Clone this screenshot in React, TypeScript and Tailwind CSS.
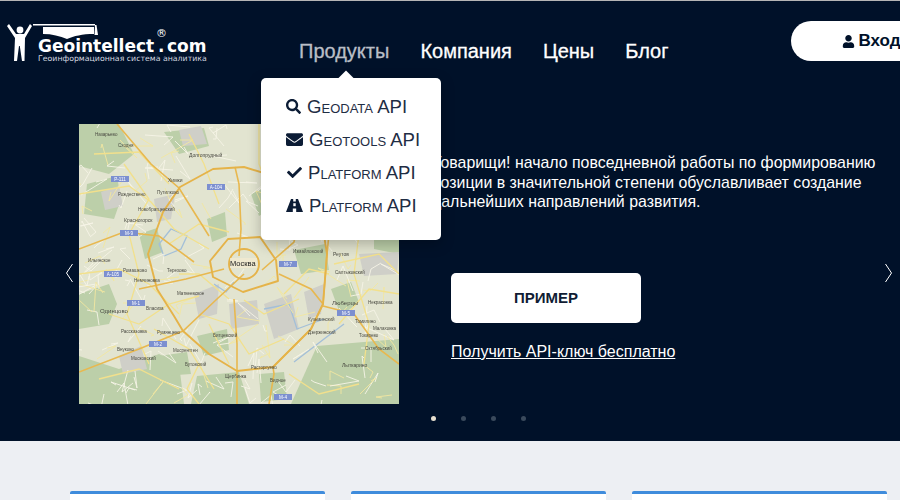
import { FaCheck, FaEnvelope, FaSearch, FaUser } from "react-icons/fa";

const font = "font-['Liberation_Sans',Arial,sans-serif]";

const parks = [
  "M0 0L40 0L55 30L30 50L0 42Z",
  "M8 60L38 52L42 75L35 95L5 90Z",
  "M0 170L30 160L38 180L30 200L0 205Z",
  "M0 232L40 245L80 230L100 240L105 280L0 280Z",
  "M205 0L250 0L245 35L212 30Z",
  "M238 222L320 215L320 280L212 280Z",
  "M118 252L160 248L170 280L112 280Z",
  "M252 165L272 158L280 178L262 192Z",
  "M85 8L125 4L130 22L100 30Z",
  "M128 95L146 88L148 112L133 118Z",
  "M295 100L320 88L320 130L295 125Z",
  "M60 110L78 104L84 128L66 135Z",
  "M172 70L190 62L200 80L180 92Z",
  "M118 212L148 205L150 226L125 232Z",
  "M215 126L246 120L250 146L222 150Z",
  "M80 232L108 228L112 250L84 252Z",
  "M180 250L205 248L208 275L182 278Z",
];

const grey = [
  "M100 6L122 2L128 20L104 22Z",
  "M225 168L245 160L242 190L230 195Z",
  "M40 232L62 222L68 245L44 250Z",
  "M262 50L300 45L310 75L270 82Z",
  "M185 180L212 170L220 205L195 215Z",
  "M115 170L140 160L138 190L120 195Z",
  "M196 65L228 60L232 90L202 95Z",
  "M75 75L96 70L92 95L78 98Z",
  "M22 68L40 62L44 82L26 86Z",
  "M280 130L320 128L318 150L285 152Z",
  "M150 180L178 176L180 200L152 205Z",
];

const mainRoads = [
  "M38 0L72 40L100 64L115 88L130 112",
  "M0 125L45 108L80 112L115 138",
  "M0 248L60 225L104 207L138 175L165 150",
  "M60 165L107 155L145 145",
  "M155 175L158 220L158 280",
  "M190 280L195 250L194 243L232 205L244 180L248 130L250 110",
  "M200 150L232 165L244 180",
  "M250 112L320 105",
  "M183 146L215 118L222 85L240 70",
  "M244 182L275 190L300 225L320 240",
  "M160 132L162 105L160 60L156 43",
];

const ringRoads = [
  "M134 45L101 63L84 88L69 130L78 165L95 192L104 207L130 230L158 247L194 243L232 205L244 180L248 130L240 80L205 55L165 43Z",
  "M149 115L181 113L197 136L199 157L164 168L134 153L131 137Z",
];

const thinRoads = [
  "M0 70L50 62L72 78L95 105L130 125",
  "M15 30L60 28L90 60",
  "M0 150L40 145L70 160L100 190",
  "M30 190L60 200L90 180L120 172",
  "M20 255L60 245L100 265",
  "M110 10L125 40L140 80",
  "M180 0L180 40L196 85L190 112",
  "M215 10L235 50L280 55L320 40",
  "M260 85L300 80L320 95",
  "M255 140L300 130L320 150",
  "M260 200L290 165L320 170",
  "M210 250L240 270L280 260",
  "M120 190L150 200L170 230L205 215",
  "M90 120L120 100L150 108",
  "M205 170L230 145L250 150",
  "M45 40L70 75L50 110L60 150L48 190L70 240",
  "M120 240L108 265L120 280",
  "M280 110L275 150L290 200L285 240",
  "M165 176L185 190L220 175",
  "M100 150L120 150L150 175",
  "M130 200L150 240",
  "M75 205L110 225L135 265",
];

// короткие улицы для плотности карты
const streets: string[] = [];
let seed = 37;
const next = (max: number) => {
  seed = (seed * 16807) % 2147483647;
  return seed % max;
};
for (let i = 0; i < 190; i++) {
  const x = next(320);
  const y = next(280);
  streets.push(`M${x} ${y}L${x + next(28) - 14} ${y + next(28) - 14}L${x + next(40) - 20} ${y + next(40) - 20}`);
}

const water = ["M92 105L80 120L85 132L102 125L108 112Z", "M135 160L147 168L155 158", "M185 185L210 180L218 205L245 195", "M215 238L245 215L265 200"];

const shields = [
  [32, 52, "Р-111"],
  [128, 60, "А-104"],
  [41, 106, "М-9"],
  [25, 147, "А-105"],
  [48, 176, "М-1"],
  [70, 217, "М-2"],
  [200, 137, "М-7"],
  [258, 186, "М-5"],
  [195, 270, "М-4"],
] as const;

const labels = [
  [39, 23, "Сходня", 4.5],
  [16, 12, "Назарьево", 4.5],
  [110, 33, "Долгопрудный", 5],
  [89, 58, "Химки", 5],
  [78, 70, "Путилково", 4.5],
  [39, 72, "Рождествено", 4.5],
  [59, 87, "Новобратцевский", 4.5],
  [45, 98, "Красногорск", 5],
  [9, 138, "Ильинское", 4.5],
  [44, 148, "Ромашково", 4.5],
  [55, 158, "Немчиновка", 4.5],
  [88, 148, "Терехово", 4.5],
  [98, 171, "Матвеевское", 4.5],
  [21, 189, "Одинцово", 6],
  [67, 186, "Власиха", 4.5],
  [42, 209, "Рассказовка", 4.5],
  [78, 210, "Румянцево", 4.5],
  [38, 227, "Внуково", 4.5],
  [52, 236, "Московский", 4.5],
  [94, 228, "Мосрентген", 4.5],
  [106, 242, "Бутовский", 4.5],
  [134, 213, "Битцевский", 4.5],
  [146, 254, "Щербинка", 4.5],
  [191, 258, "Видное", 4.5],
  [172, 245, "Расторгуево", 4.5],
  [229, 210, "Дзержинский", 4.5],
  [229, 197, "Кузьминский", 4.5],
  [253, 181, "Люберцы", 6],
  [289, 180, "Некрасовка", 4.5],
  [276, 199, "Томилино", 4.5],
  [294, 206, "Малаховка", 4.5],
  [280, 213, "Токарево", 4.5],
  [286, 226, "Октябрьский", 4.5],
  [263, 243, "Лыткарино", 5],
  [254, 132, "Реутов", 5],
  [256, 150, "Салтыковский", 4.5],
  [214, 129, "Измайловский", 4.5],
] as const;

const MoscowMap = () => (
  <svg width="320" height="280" viewBox="0 0 320 280" className="block shrink-0 blur-[0.3px]">
    <rect width="320" height="280" fill="#e2e4d0" />
    {parks.map((d) => (
      <path key={d} d={d} fill="#bccfa9" />
    ))}
    {grey.map((d) => (
      <path key={d} d={d} fill="#cfcfc8" />
    ))}
    {water.map((d) => (
      <path key={d} d={d} fill="none" stroke="#a3bfd8" strokeWidth="1.3" />
    ))}
    {streets.map((d, i) => (
      <path key={i} d={d} fill="none" stroke={i % 3 === 0 ? "#f2e7a0" : "#f6f4e6"} strokeWidth="0.9" />
    ))}
    {thinRoads.map((d) => (
      <path key={d} d={d} fill="none" stroke="#f2e08c" strokeWidth="1.3" />
    ))}
    {mainRoads.map((d) => (
      <path key={d} d={d} fill="none" stroke="#e8b84f" strokeWidth="1.6" />
    ))}
    {ringRoads.map((d) => (
      <path key={d} d={d} fill="none" stroke="#e5b349" strokeWidth="1.9" strokeLinejoin="round" />
    ))}
    <circle cx="165" cy="140" r="15" fill="none" stroke="#e5b349" strokeWidth="1.9" />
    {labels.map(([x, y, text, size]) => (
      <text key={text} x={x} y={y} fontSize={size} fill="#4a4a42" fontFamily="Liberation Sans">
        {text}
      </text>
    ))}
    {shields.map(([x, y, text]) => (
      <g key={text}>
        <rect x={x} y={y} width="18" height="6" fill="#7c8fd0" />
        <text x={x + 9} y={y + 5} fontSize="4.6" fill="#fff" textAnchor="middle" fontFamily="Liberation Sans">
          {text}
        </text>
      </g>
    ))}
    <rect x="151" y="134" width="27" height="10" fill="#f1ead0" opacity="0.85" />
    <text x="151" y="142" fontSize="7.5" fontFamily="Liberation Sans" fill="#222">
      Москва
    </text>
  </svg>
);

const Logo = () => (
  <div className="relative w-[294px] h-[77px] shrink-0">
    <svg width="110" height="70" viewBox="0 0 110 70" className="absolute -left-[5px] -top-[1px]">
      <path d="M7 26L9 24L16 34H24L30 24L32 26L25 38L24.5 61H22L19.8 46H19L17 61H14L15 38Z" fill="#fff" />
      <circle cx="20" cy="30" r="3.4" fill="#fff" />
      <path d="M33 24H95V25.5H33Z" fill="#fff" />
      <path d="M43 27H94V34C82 34 74 36 67 39C60 36 52 34 43 34Z" fill="#fff" />
      <path d="M95 25H96.5L98 35H94.5Z" fill="#fff" />
    </svg>
    <div className="absolute left-[33px] top-[37px] font-['DejaVu_Sans',sans-serif] font-bold text-white text-[17px] leading-4 whitespace-nowrap">
      Geointellect
    </div>
    <div className="absolute left-[151px] top-[28px] font-['DejaVu_Sans',sans-serif] text-white text-[11px] leading-[9px]">®</div>
    <div className="absolute left-[153px] top-[37px] font-['DejaVu_Sans',sans-serif] font-bold text-white text-[17px] leading-4">.</div>
    <div className="absolute left-[162px] top-[37px] font-['DejaVu_Sans',sans-serif] font-bold text-white text-[17px] leading-4">com</div>
    <div className="absolute left-[33px] top-[53px] font-['DejaVu_Sans',sans-serif] text-[#d6dae0] text-[7.8px] leading-[10px] whitespace-nowrap">
      Геоинформационная система аналитика
    </div>
  </div>
);

const RoadIcon = () => (
  <svg width="17" height="13" viewBox="0 0 17 13" fill="#0c1c35">
    <path d="M5 0H7.2V2.5H9.8V0H12L17 13H10.2V9.5H6.8V13H0Z" />
    <rect x="7.3" y="4.2" width="2.4" height="3" fill="#fff" />
  </svg>
);

const menuItems = [
  { icon: <FaSearch size={15} />, label: "Geodata API", pl: "pl-[25px]" },
  { icon: <FaEnvelope size={17} />, label: "Geotools API", pl: "pl-[25px]" },
  { icon: <FaCheck size={15} />, label: "Platform API", pl: "pl-[26px]" },
  { icon: <RoadIcon />, label: "Platform API", pl: "pl-[25px]" },
];

const DropdownMenu = () => (
  <div className="absolute left-[261px] top-[78px] w-[180px] h-[162px] bg-white rounded-[5px] shadow-[0_4px_14px_rgba(0,0,0,0.25)] pt-[12px] z-10">
    <div className="absolute left-[79px] -top-[5px] w-[12px] h-[12px] bg-white rotate-45" />
    {menuItems.map((item, i) => (
      <div key={i} className={`flex items-center gap-[6px] h-[33px] ${item.pl} text-[#0c1c35]`}>
        {item.icon}
        <span className="text-[18.6px] [font-variant:small-caps] text-[#1f2d44] whitespace-nowrap">{item.label}</span>
      </div>
    ))}
  </div>
);

const Chevron = ({ flip }: { flip?: boolean }) => (
  <svg width="9" height="20" viewBox="0 0 9 20" className={flip ? "rotate-180" : ""}>
    <path d="M7.5 1L1.5 10L7.5 19" fill="none" stroke="#fff" strokeWidth="1" />
  </svg>
);

export default function App() {
  return (
    <div className={`${font} relative w-[900px] h-[500px] overflow-hidden bg-[#edeff3]`}>
      <div className="h-px bg-[#b5b5b5]" />
      <div className="relative bg-[#001129] h-[440px]">
        <header className="flex h-[77px] pl-[5px]">
          <Logo />
          <nav className="flex items-center gap-[31px] text-[20px] text-white pt-[23px] h-[77px] [-webkit-text-stroke:0.3px_white]">
            <span className="text-[#b9bec6] [-webkit-text-stroke:0.3px_#b9bec6]">Продукты</span>
            <span>Компания</span>
            <span>Цены</span>
            <span>Блог</span>
          </nav>
          <div className="ml-[123px] mt-[20px] shrink-0 w-[140px] h-[40px] bg-white rounded-l-[20px] flex items-center pl-[51px] gap-[3px] text-[#001129] text-[17px] font-bold">
            <FaUser size={13} />
            <span>Вход</span>
          </div>
        </header>

        <section className="flex pl-[79px] pt-[46px]">
          <MoscowMap />
          <div className="pl-[33px] pt-[29px] text-white">
            <p className="text-[15.9px] leading-[19.6px] whitespace-nowrap">
              Товарищи! начало повседневной работы по формированию
              <br />
              позиции в значительной степени обуславливает создание
              <br />
              дальнейших направлений развития.
            </p>
            <div className="ml-[19px] mt-[61px]">
              <button className="w-[190px] h-[50px] bg-white rounded-[5px] text-[#101c33] text-[15px] font-bold">ПРИМЕР</button>
              <div className="mt-[17px]">
                <a className="text-[16px] underline">Получить API-ключ бесплатно</a>
              </div>
            </div>
          </div>
        </section>

        <div className="flex pl-[431px] gap-[25px] pt-[12px]">
          <span className="w-[5px] h-[5px] rounded-full bg-[#e6e0d0]" />
          <span className="w-[5px] h-[5px] rounded-full bg-[#3a4a5c]" />
          <span className="w-[5px] h-[5px] rounded-full bg-[#3a4a5c]" />
          <span className="w-[5px] h-[5px] rounded-full bg-[#3a4a5c]" />
        </div>

        <div className="absolute left-[65px] top-[262px]">
          <Chevron />
        </div>
        <div className="absolute left-[884px] top-[262px]">
          <Chevron flip />
        </div>
      </div>

      <div className="flex pl-[70px] gap-[26px] pt-[50px]">
        <div className="w-[255px] h-[40px] bg-white border-t-[3px] border-[#3f8cdc] rounded-t-[2px]" />
        <div className="w-[255px] h-[40px] bg-white border-t-[3px] border-[#3f8cdc] rounded-t-[2px]" />
        <div className="w-[255px] h-[40px] bg-white border-t-[3px] border-[#3f8cdc] rounded-t-[2px]" />
      </div>

      <DropdownMenu />
    </div>
  );
}
